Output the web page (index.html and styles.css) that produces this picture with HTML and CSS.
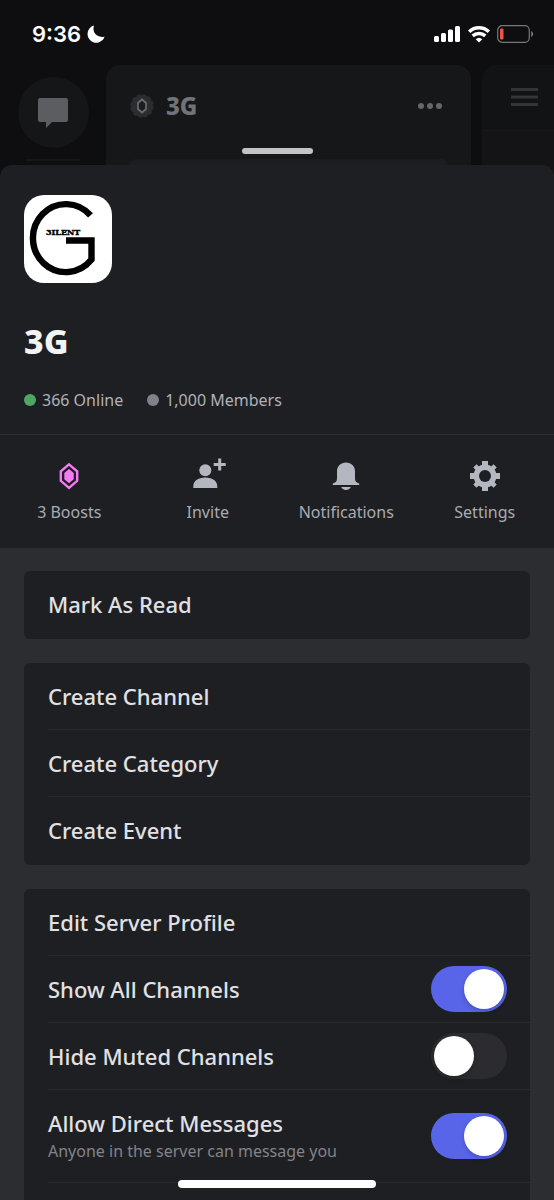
FILE: index.html
```
<!DOCTYPE html>
<html lang="en">
<head>
<meta charset="utf-8">
<meta name="viewport" content="width=device-width, initial-scale=1">
<title>3G</title>
<link rel="stylesheet" href="styles.css">
</head>
<body>
<div class="status-bar">
  <div class="status-time">
    <span>9:36</span>
    <svg width="18" height="18" viewBox="0 0 18 18" aria-label="Do not disturb"><path fill="#fff" d="M7 .6A8.700 8.700 0 1 0 17.600 11.400C12 13.600 4.300 8.500 7 .6Z"/></svg>
  </div>
  <div class="status-icons">
    <svg width="27" height="17" viewBox="0 0 27 17" fill="#fff"><rect x="0" y="10" width="5" height="6" rx="1.500"/><rect x="7" y="7" width="5" height="9" rx="1.500"/><rect x="14" y="3.500" width="5" height="12.500" rx="1.500"/><rect x="21" y="0" width="5" height="16" rx="1.500"/></svg>
    <svg width="22" height="17" viewBox="0 0 22 17" fill="none" stroke="#fff" stroke-width="3.500"><path d="M1.200 5.700a14.200 14.200 0 0 1 19.600 0"/><path d="M4.700 9.900a9.300 9.300 0 0 1 12.600 0"/><path fill="#fff" stroke="none" d="M11 16.500 7.700 13.300a4.800 4.800 0 0 1 6.600 0Z"/></svg>
    <svg width="36" height="18" viewBox="0 0 36 18"><rect x=".7" y=".7" width="31.600" height="16.600" rx="4.500" fill="none" stroke="#77787a" stroke-width="1.200"/><rect x="3" y="3.500" width="3.500" height="11" rx="1.300" fill="#ec5545"/><path d="M34.200 6v6q2-.9 2-3t-2-3Z" fill="#77787a"/></svg>
  </div>
</div>

<div class="backdrop">
  <div class="rail">
    <div class="rail-button">
      <svg width="30" height="30" viewBox="0 0 30 30"><path fill="#5c5d60" d="M2 0h26a2 2 0 0 1 2 2v20a2 2 0 0 1-2 2H14l-6 6v-6H2a2 2 0 0 1-2-2V2a2 2 0 0 1 2-2Z"/></svg>
    </div>
    <div class="rail-line"></div>
  </div>
  <div class="channel-panel">
    <div class="channel-head">
      <svg width="24" height="24" viewBox="0 0 24 24"><circle cx="12" cy="12" r="10.800" fill="#2c2d30"/><circle cx="12" cy="12" r="10.800" fill="none" stroke="#2c2d30" stroke-width="2" stroke-dasharray="3.700 1.955"/><path d="M12 5.500l4 3.500v6l-4 3.500-4-3.500V9Z" fill="#1b1c1e" stroke="#6b6c6f" stroke-width="1.700"/></svg>
      <span class="channel-name">3G</span>
      <svg width="24" height="6" viewBox="0 0 24 6" fill="#66676a"><circle cx="3" cy="3" r="3"/><circle cx="12" cy="3" r="3"/><circle cx="21" cy="3" r="3"/></svg>
    </div>
    <div class="channel-search"></div>
  </div>
  <div class="chat-panel">
    <div class="chat-head">
      <svg width="27" height="18" viewBox="0 0 27 18" fill="#343538"><path d="M0 0h27v3H0zM0 7.500h27v3H0zM0 15h27v3H0z"/></svg>
    </div>
  </div>
</div>

<main class="sheet">
  <div class="grabber"></div>
  <header class="server">
    <svg class="server-icon" width="88" height="88" viewBox="0 0 88 88" role="img" aria-label="3ilent">
      <rect width="88" height="88" fill="#fff"/>
      <path d="M66.500 20.400A33 34 0 1 0 67.500 64.600V45.500H42" fill="none" stroke="#000" stroke-width="6.400"/>
      <text class="logo-word" x="22" y="40">3ILENT</text>
    </svg>
    <h1 class="server-name">3G</h1>
    <div class="stats">
      <span class="stat"><i class="dot dot-online"></i>366 Online</span>
      <span class="stat"><i class="dot"></i>1,000 Members</span>
    </div>
  </header>

  <nav class="actions">
    <button class="action" type="button">
      <svg width="32" height="32" viewBox="0 0 32 32"><path d="M16 4.400l8.200 7v9.400l-8.200 7-8.200-7v-9.400Z" fill="none" stroke="#f47bf4" stroke-width="2.400"/><path d="M16 9l4.700 4v6.200L16 23.200l-4.700-4V13Z" fill="#f47bf4"/></svg>
      3 Boosts
    </button>
    <button class="action" type="button">
      <svg width="36" height="32" viewBox="0 0 36 32" fill="#b5b7c0"><circle cx="15.300" cy="10.300" r="6"/><path d="M3.300 28v-1.500c0-5.500 4.500-9 12-9s12 3.500 12 9V28ZM28.200-1.500h3v4.500h4.500v3h-4.500v4.500h-3V6h-4.500V3h4.500Z"/></svg>
      Invite
    </button>
    <button class="action" type="button">
      <svg width="32" height="32" viewBox="0 0 32 32" fill="#b5b7c0"><path d="M16 2.500c-5.200 0-9 3.700-9 8.800v7.500c0 2.500-1.500 4-4.200 4.700v1.600h26.400v-1.600c-2.700-.7-4.200-2.200-4.200-4.700v-7.500c0-5.100-3.800-8.800-9-8.800ZM11.200 27h9.600c-.6 1.800-2.400 2.900-4.800 2.900s-4.200-1.100-4.800-2.900Z"/></svg>
      Notifications
    </button>
    <button class="action" type="button">
      <svg width="32" height="32" viewBox="0 0 32 32"><g fill="#b5b7c0"><path d="M13 1h6v30h-6zM1 13h30v6H1z"/><path d="M13.700 1.700h4.600v28.600h-4.600zM1.700 13.700h28.600v4.600H1.700z" transform="rotate(45 16 16)"/><circle cx="16" cy="16" r="11.500"/></g><circle cx="16" cy="16" r="6" fill="#1e1f22"/></svg>
      Settings
    </button>
  </nav>

  <div class="groups">
    <section class="group">
      <button class="row" type="button"><span class="label">Mark As Read</span></button>
    </section>
    <section class="group">
      <button class="row" type="button"><span class="label">Create Channel</span></button>
      <button class="row" type="button"><span class="label">Create Category</span></button>
      <button class="row" type="button"><span class="label">Create Event</span></button>
    </section>
    <section class="group group-open">
      <button class="row" type="button"><span class="label">Edit Server Profile</span></button>
      <label class="row"><span class="label">Show All Channels</span><input class="switch" type="checkbox" role="switch" checked></label>
      <label class="row"><span class="label">Hide Muted Channels</span><input class="switch" type="checkbox" role="switch"></label>
      <label class="row row-tall"><span class="label">Allow Direct Messages<small class="hint">Anyone in the server can message you</small></span><input class="switch" type="checkbox" role="switch" checked></label>
    </section>
  </div>
</main>
<div class="home-indicator"></div>
</body>
</html>
```
FILE: styles.css
```
* { box-sizing: border-box; }

body {
  margin: 0;
  height: 100vh;
  overflow: hidden;
  display: flex;
  flex-direction: column;
  background: #0e0e10;
  color: #e0e1e5;
  font-family: "Noto Sans", "Open Sans", sans-serif;
}

button {
  border: 0;
  background: none;
  color: inherit;
  font: inherit;
}

svg { display: block; flex: none; overflow: visible; }

/* Status bar */
.status-bar {
  flex: none;
  height: 65px;
  padding: 3px 21px 0 32px;
  display: flex;
  align-items: center;
  justify-content: space-between;
}
.status-time {
  display: flex;
  align-items: center;
  gap: 6px;
  color: #fff;
  font: 600 22px/28px Inter, sans-serif;
}
.status-icons { display: flex; align-items: center; gap: 7px; }

/* Dimmed app behind the sheet */
.backdrop {
  flex: none;
  height: 112px;
  display: grid;
  grid-template-columns: 106px 1fr 72px;
  overflow: hidden;
}
.rail {
  display: flex;
  flex-direction: column;
  align-items: center;
  gap: 11px;
  padding-top: 12px;
}
.rail-button {
  display: grid;
  place-items: center;
  width: 71px;
  height: 71px;
  border-radius: 50%;
  background: #151618;
}
.rail-line { width: 54px; height: 2px; background: #151618; }
.channel-panel {
  margin-right: 11px;
  padding: 0 24px;
  border-radius: 14px 14px 0 0;
  background: #161719;
}
.channel-head {
  display: flex;
  align-items: center;
  gap: 12px;
  height: 82px;
  padding-right: 5px;
}
.channel-name {
  flex: 1;
  color: #727376;
  font-size: 24px;
  font-weight: 800;
  line-height: 32px;
}
.channel-search {
  height: 40px;
  margin: 12px 0 0;
  border-radius: 6px;
  background: #1c1d20;
}
.chat-panel {
  border-radius: 14px 0 0 0;
  background: #141315;
}
.chat-head {
  height: 66px;
  padding: 23px 0 0 29px;
  border-bottom: 1px solid #18191b;
  border-radius: 14px 0 0 0;
  background: #121315;
}

/* Sheet */
.sheet {
  position: relative;
  flex: 1;
  margin-top: -12px;
  display: flex;
  flex-direction: column;
  border-radius: 12px 12px 0 0;
  background: #1e1f22;
}
.grabber {
  position: absolute;
  top: -17px;
  left: 50%;
  width: 71px;
  height: 6px;
  margin-left: -35px;
  border-radius: 3px;
  background: #c3c4c7;
}
.server {
  padding: 30px 24px 22px;
  border-bottom: 1px solid #2b2d31;
}
.server-icon { border-radius: 20px; overflow: hidden; }
.logo-word {
  font: 700 8px "DejaVu Serif", serif;
  stroke: #000;
  stroke-width: .4px;
}
.server-name {
  margin: 36px 0 0;
  color: #f2f3f5;
  font-size: 34px;
  font-weight: 800;
  line-height: 44px;
}
.stats {
  display: flex;
  gap: 24px;
  margin-top: 25px;
  color: #b0b2b8;
  font-size: 16px;
  line-height: 24px;
}
.stat { display: flex; align-items: center; gap: 6px; }
.dot {
  width: 12px;
  height: 12px;
  border-radius: 50%;
  background: #80828a;
}
.dot-online { background: #4fa562; }

.actions {
  display: grid;
  grid-template-columns: repeat(4, 1fr);
}
.action {
  display: flex;
  flex-direction: column;
  align-items: center;
  gap: 8px;
  padding: 25px 0 24px;
  color: #a9abb1;
  font-size: 16px;
  line-height: 24px;
}

/* Option groups */
.groups {
  flex: 1;
  display: flex;
  flex-direction: column;
  gap: 24px;
  padding: 23px 24px 0;
  background: #2b2d31;
}
.group {
  flex: none;
  padding: 0 0 1px 24px;
  border-radius: 6px;
  background: #1e1f22;
}
.group-open {
  flex: 1;
  border-radius: 6px 6px 0 0;
}
.row {
  display: flex;
  align-items: center;
  justify-content: space-between;
  width: 100%;
  min-height: 67px;
  padding: 0 23px 0 0;
  border-bottom: 1px solid #2a2b2f;
  text-align: left;
}
.row:last-child { border-bottom-color: transparent; }
.row-tall { min-height: 93px; }
.group-open .row:last-child { border-bottom-color: #2a2b2f; }
.label {
  font-size: 22px;
  font-weight: 500;
  line-height: 30px;
}
.hint {
  display: block;
  color: #82848b;
  font-size: 16px;
  font-weight: 400;
  line-height: 26px;
}

.switch {
  appearance: none;
  flex: none;
  display: flex;
  align-items: center;
  width: 76px;
  height: 46px;
  margin: 0;
  padding: 0 3px;
  border-radius: 23px;
  background: #2c2c30;
}
.switch::before {
  content: "";
  width: 40px;
  height: 40px;
  border-radius: 50%;
  background: #fff;
  box-shadow: 0 2px 5px rgba(0, 0, 0, .2);
}
.switch:checked {
  justify-content: flex-end;
  background: #5865e8;
}

.home-indicator {
  position: fixed;
  bottom: 12px;
  left: 50%;
  width: 198px;
  height: 8px;
  margin-left: -99px;
  border-radius: 4px;
  background: #fff;
}
```
